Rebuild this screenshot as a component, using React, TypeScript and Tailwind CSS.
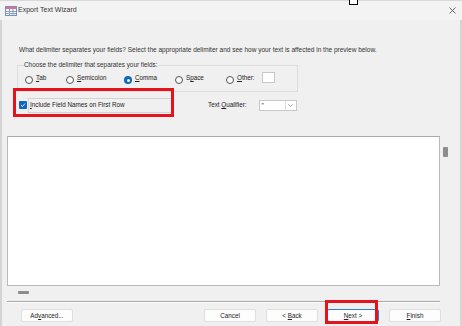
const RADIOS = [
  { key: 'tab', pre: '', hot: 'T', post: 'ab', w: 'w-[41px]' },
  { key: 'semi', pre: '', hot: 'S', post: 'emicolon', w: 'w-[58px]' },
  { key: 'comma', pre: '', hot: 'C', post: 'omma', w: 'w-[51px]', checked: true },
  { key: 'space', pre: 'S', hot: 'p', post: 'ace', w: 'w-[51px]' },
  { key: 'other', pre: '', hot: 'O', post: 'ther:', w: 'w-[36px]' },
]

function TableIcon() {
  return (
    <svg width="12" height="10" viewBox="0 0 12 10">
      <rect x="0.5" y="0.5" width="11" height="9" fill="#f4f7fb" stroke="#7c8fb6" />
      <rect x="1" y="1" width="10" height="2" fill="#d9708f" />
      <path d="M1 5.5h10M1 7.5h10M4.5 3v6M8 3v6" stroke="#8aa3cf" strokeWidth="1" />
    </svg>
  )
}

function Radio({ checked }: { checked?: boolean }) {
  if (checked) {
    return (
      <span className="mt-[4px] flex h-[8px] w-[8px] shrink-0 items-center justify-center rounded-full bg-[#0f65c0]">
        <span className="h-[3px] w-[3px] rounded-full bg-white" />
      </span>
    )
  }
  return <span className="mt-[4px] h-[8px] w-[8px] shrink-0 rounded-full border border-[#555] bg-[#f8f8f8]" />
}

function Btn({ children, primary, className }: { children: React.ReactNode; primary?: boolean; className?: string }) {
  return (
    <div
      className={`flex h-[13px] w-[52px] items-center justify-center rounded-[2px] border bg-[#fdfdfd] text-[6.3px] text-[#222] ${
        primary ? 'border-[#2f7fd3]' : 'border-[#dedede]'
      } ${className ?? ''}`}
    >
      <span>{children}</span>
    </div>
  )
}

export default function App() {
  return (
    <div className="relative h-[326px] w-[462px] overflow-hidden bg-[#f0f0f0] font-['Liberation_Sans',Arial,sans-serif] text-[#222]">
      {/* title bar */}
      <div className="flex h-[20px] items-center border-t border-[#d8d8d8] bg-[#f3f3f3] pl-[5px] pr-[6px]">
        <TableIcon />
        <span className="ml-[1px] text-[7px] text-[#333]">Export Text Wizard</span>
        <svg className="ml-auto" width="7" height="7" viewBox="0 0 7 7">
          <path d="M0.5 0.5l6 6M6.5 0.5l-6 6" stroke="#555" strokeWidth="0.9" />
        </svg>
      </div>

      <div className="flex h-[306px] flex-col border-l-2 border-r-2 border-[#d4d4d4]">
        <p className="mt-[26px] pl-[17px] text-[6.5px] leading-[8px] text-[#333]">
          What delimiter separates your fields? Select the appropriate delimiter and see how your text is affected in the preview below.
        </p>

        <fieldset className="ml-[15px] mt-[7px] h-[31px] w-[281px] border border-[#dddddd] pl-[6px]">
          <legend className="text-[6.4px] leading-[8px] text-[#333]">Choose the delimiter that separates your fields:</legend>
          <div className="ml-[1px] mt-[3px] flex items-start">
            {RADIOS.map(r => (
              <div key={r.key} className={`flex shrink-0 items-start gap-[3px] ${r.w}`}>
                <Radio checked={r.checked} />
                <span className="mt-[2px] text-[6.3px] leading-[8px]">
                  {r.pre}
                  <span className="underline">{r.hot}</span>
                  {r.post}
                </span>
              </div>
            ))}
            <div className="h-[11px] w-[13px] border border-[#c8c8c8] bg-white" />
          </div>
        </fieldset>

        <div className="ml-[17px] mt-[5px] flex h-[16px] items-center">
          <span className="flex h-[8px] w-[8px] items-center justify-center rounded-[1px] bg-[#0f65c0]">
            <svg width="6" height="6" viewBox="0 0 6 6">
              <path d="M1 3.2l1.4 1.3L5 1.6" stroke="#fff" strokeWidth="0.9" fill="none" />
            </svg>
          </span>
          <div className="ml-[1px] flex h-[15px] w-[146px] items-center border border-[#d3d3d3] pl-[1px] text-[6.3px]">
            <span>
              <span className="underline">I</span>nclude Field Names on First Row
            </span>
          </div>
          <span className="ml-[34px] text-[6.3px]">
            Text <span className="underline">Q</span>ualifier:
          </span>
          <div className="ml-[12px] flex h-[11px] w-[38px] items-stretch border border-[#c8c8c8] bg-white">
            <span className="flex-1 pl-[2px] text-[6.3px] leading-[9px]">"</span>
            <span className="flex w-[11px] items-center justify-center border-l border-[#dcdcdc]">
              <svg width="5" height="3" viewBox="0 0 5 3">
                <path d="M0.3 0.3l2.2 2.2 2.2-2.2" stroke="#777" strokeWidth="0.7" fill="none" />
              </svg>
            </span>
          </div>
        </div>

        <div className="mt-[23px] flex">
          <div className="ml-[5px] h-[150px] w-[433px] border border-[#b9b9b9] border-t-[#a8a8a8] bg-white" />
          <div className="ml-[3px] mt-[11px] h-[10px] w-[5px] rounded-[1px] bg-[#8c8c8c]" />
        </div>

        <div className="ml-[16px] mt-[5px] h-[3px] w-[11px] rounded-[1px] bg-[#8c8c8c]" />

        <div className="ml-[5px] mt-[7px] h-[2px] w-[433px] border-t border-[#a9a9a9] bg-white" />

        <div className="mt-[6px] flex items-center">
          <Btn className="ml-[19px]">
            Ad<span className="underline">v</span>anced...
          </Btn>
          <Btn className="ml-[131px]">Cancel</Btn>
          <Btn className="ml-[10px]">
            &lt; <span className="underline">B</span>ack
          </Btn>
          <Btn primary className="ml-[9px]">
            <span className="underline">N</span>ext &gt;
          </Btn>
          <Btn className="ml-[10px]">
            <span className="underline">F</span>inish
          </Btn>
        </div>
      </div>

      {/* annotation boxes */}
      <div className="absolute left-[13px] top-[88px] h-[29px] w-[161px] border-[3px] border-[#e3141c]" />
      <div className="absolute left-[325px] top-[300px] h-[24px] w-[53px] border-[3px] border-[#e3141c]" />
      {/* stray cursor */}
      <div className="absolute left-[349px] top-[-3px] h-[8px] w-[9px] border-[1.5px] border-black bg-white" />
    </div>
  )
}
